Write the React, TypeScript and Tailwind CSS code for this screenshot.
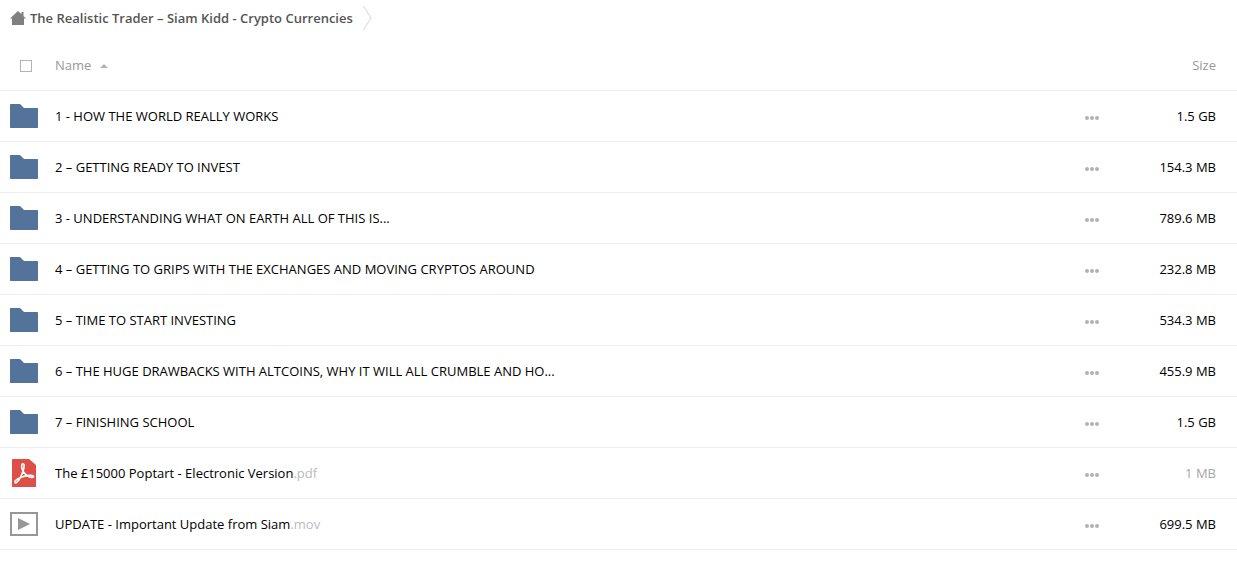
type FileKind = "folder" | "pdf" | "video";

interface FileEntry {
  name: string;
  ext?: string;
  kind: FileKind;
  size: string;
  muted?: boolean;
}

const files: FileEntry[] = [
  { name: "1 - HOW THE WORLD REALLY WORKS", kind: "folder", size: "1.5 GB" },
  { name: "2 – GETTING READY TO INVEST", kind: "folder", size: "154.3 MB" },
  { name: "3 - UNDERSTANDING WHAT ON EARTH ALL OF THIS IS...", kind: "folder", size: "789.6 MB" },
  { name: "4 – GETTING TO GRIPS WITH THE EXCHANGES AND MOVING CRYPTOS AROUND", kind: "folder", size: "232.8 MB" },
  { name: "5 – TIME TO START INVESTING", kind: "folder", size: "534.3 MB" },
  { name: "6 – THE HUGE DRAWBACKS WITH ALTCOINS, WHY IT WILL ALL CRUMBLE AND HO...", kind: "folder", size: "455.9 MB" },
  { name: "7 – FINISHING SCHOOL", kind: "folder", size: "1.5 GB" },
  { name: "The £15000 Poptart - Electronic Version", ext: ".pdf", kind: "pdf", size: "1 MB", muted: true },
  { name: "UPDATE - Important Update from Siam", ext: ".mov", kind: "video", size: "699.5 MB" },
];

function HomeIcon() {
  return (
    <svg className="w-4 h-[14px]" viewBox="0 0 16 14" fill="#808080" aria-hidden="true">
      <path d="M8 0 0 7.500h2V14h12V7.500h2L13.500 5V1h-2v2.200z" />
    </svg>
  );
}

function FileIcon({ kind }: { kind: FileKind }) {
  if (kind === "folder") {
    return (
      <svg className="w-7 h-6" viewBox="0 0 28 24" fill="#54739b" aria-hidden="true">
        <path d="M.5 0H10l4 4h13.5l.5.5v19l-.5.5H.5l-.5-.5V.5z" />
      </svg>
    );
  }
  if (kind === "pdf") {
    return (
      <svg className="w-6 h-7" viewBox="0 0 24 28" aria-hidden="true">
        <path d="M.5 0H17l7 6v21.5l-.5.5H.5l-.5-.5V.5z" fill="#de5047" />
        <path
          d="M10.800 4.700c1.800-.3 1.500 3 .5 6.500-1.300 4.600-4.400 11.300-6.800 12.400-1.500.7-2.400-.8-1-2.100 2.700-2.600 9.200-5 14.500-5.100 3.900-.1 4.500 1.900 2.400 2.100-3.700.3-8.900-4-10.200-8.200-.8-2.900-.8-5.400.6-5.600z"
          fill="none"
          stroke="#fff"
          strokeWidth="1.6"
          strokeLinejoin="round"
        />
      </svg>
    );
  }
  return (
    <svg className="w-7 h-6" viewBox="0 0 28 24" aria-hidden="true">
      <rect x="1" y="1" width="26" height="22" fill="none" stroke="#979797" strokeWidth="2" />
      <path d="M8 6v12l12-6z" fill="#979797" />
    </svg>
  );
}

function FileRow({ file }: { file: FileEntry }) {
  return (
    <tr className="h-[51px] border-b border-[#eeeeee]">
      <td className="p-0">
        <div className="ml-[10px] flex w-7 justify-center">
          <FileIcon kind={file.kind} />
        </div>
      </td>
      <td className="p-0">
        <a href="#" className="block truncate">
          {file.name}
          {file.ext && <span className="text-[#bbbbbb]">{file.ext}</span>}
        </a>
      </td>
      <td className="p-0">
        <button type="button" aria-label={`Actions for ${file.name}`} className="mt-1 flex h-5 w-[14px] items-center">
          <svg className="w-[14px] h-1" viewBox="0 0 14 4" fill="#b2b2b2" aria-hidden="true">
            <circle cx="2" cy="2" r="2" />
            <circle cx="7" cy="2" r="2" />
            <circle cx="12" cy="2" r="2" />
          </svg>
        </button>
      </td>
      <td className={file.muted ? "p-0 pr-[21px] text-right text-[#a5a5a5]" : "p-0 pr-[21px] text-right"}>
        {file.size}
      </td>
    </tr>
  );
}

export default function App() {
  return (
    <main className="bg-white font-['Open_Sans','Noto_Sans',sans-serif] text-[13px] leading-5 text-black">
      <nav aria-label="Breadcrumb" className="flex h-10 items-center px-[10px] pb-1">
        <a href="#" className="flex items-center gap-1 font-semibold text-[#555555]">
          <HomeIcon />
          The Realistic Trader – Siam Kidd - Crypto Currencies
        </a>
        <svg className="ml-2.5 h-6 w-[9px]" viewBox="0 0 9 24" fill="none" stroke="#d5d5d5" aria-hidden="true">
          <path d="M.5 0 8 12 .5 24" />
        </svg>
      </nav>
      <table className="w-full table-fixed border-collapse">
        <colgroup>
          <col className="w-[55px]" />
          <col />
          <col className="w-[52px]" />
          <col className="w-[100px]" />
        </colgroup>
        <thead>
          <tr className="h-[50px] border-b border-[#eeeeee] text-[#999999]">
            <th className="p-0 pt-0.5 text-left">
              <input
                type="checkbox"
                aria-label="Select all"
                className="ml-5 block size-3 appearance-none border border-[#b2b2b2] bg-white"
              />
            </th>
            <th className="p-0 text-left font-normal">
              <button type="button" className="flex items-center gap-[9px]">
                Name
                <svg className="mt-0.5 h-1 w-2" viewBox="0 0 8 4" fill="#b2b2b2" aria-hidden="true">
                  <path d="M4 0l4 4H0z" />
                </svg>
              </button>
            </th>
            <th className="p-0" />
            <th className="p-0 pr-[21px] text-right font-normal">Size</th>
          </tr>
        </thead>
        <tbody>
          {files.map((file) => (
            <FileRow key={file.name} file={file} />
          ))}
        </tbody>
      </table>
    </main>
  );
}
